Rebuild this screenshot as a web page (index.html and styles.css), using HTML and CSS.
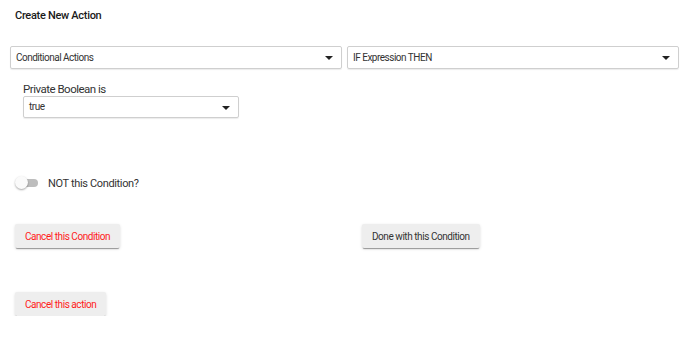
FILE: index.html
```html
<!DOCTYPE html>
<html lang="en">
<head>
  <meta charset="UTF-8">
  <title>Create New Action</title>
  <link rel="stylesheet" href="styles.css">
</head>
<body>

  <div class="title">Create New Action</div>

  <div class="select-row">
    <div class="dropdown">Conditional Actions<span class="caret"></span></div>
    <div class="dropdown">IF Expression THEN<span class="caret"></span></div>
  </div>

  <div class="field">
    <div class="field-label">Private Boolean is</div>
    <div class="dropdown small">true<span class="caret"></span></div>
  </div>

  <div class="toggle-row">
    <span class="switch"><span class="knob"></span></span>
    <span class="toggle-label">NOT this Condition?</span>
  </div>

  <div class="button-row">
    <div class="half"><button class="btn red">Cancel this Condition</button></div>
    <div class="half"><button class="btn">Done with this Condition</button></div>
  </div>

  <div class="button-row last">
    <div class="half"><button class="btn red">Cancel this action</button></div>
  </div>

</body>
</html>
```

FILE: styles.css
```css
body { margin: 0; font-family: Roboto, "Liberation Sans", sans-serif; color: #222; background: #fff; }
.title { padding: 8px 15px 0; font-size: 11px; letter-spacing: -0.3px; line-height: 16px; font-weight: 500; color: #1a1a1a; }
.select-row { display: flex; gap: 5px; padding: 0 11px 0 10px; margin-top: 22px; }
.dropdown { position: relative; flex: 1; height: 23px; box-sizing: border-box; border: 1px solid #cfcfcf; box-shadow: 0 1px 1px rgba(0,0,0,0.08); border-radius: 2px; padding: 0 5px; font-size: 10px; letter-spacing: -0.5px; line-height: 21px; color: #333; }
.caret { position: absolute; right: 8px; top: 9px; width: 0; height: 0; border-left: 4px solid transparent; border-right: 4px solid transparent; border-top: 4px solid #222; }
.field { margin: 13px 0 0 23px; }
.field-label { font-size: 11.5px; letter-spacing: -0.5px; line-height: 14px; color: #333; }
.dropdown.small { flex: none; width: 216px; height: 22px; line-height: 20px; }
.toggle-row { display: flex; align-items: center; gap: 10px; margin: 57px 0 0 15px; height: 16px; }
.switch { position: relative; width: 23px; height: 14px; }
.switch::before { content: ""; position: absolute; left: 4px; right: 0; top: 3px; height: 8px; border-radius: 4px; background: #bdbdbd; }
.knob { position: absolute; left: 0; top: 0; width: 13px; height: 13px; border-radius: 50%; background: #fafafa; box-shadow: 0 1px 2px rgba(0,0,0,0.35); }
.toggle-label { font-size: 11px; letter-spacing: -0.35px; color: #333; }
.button-row { display: flex; padding: 0 0 0 15px; margin-top: 33px; }
.button-row.last { margin-top: 44px; }
.half { flex: none; width: 347px; }
.btn { height: 24px; padding: 0 10px; border: none; border-radius: 2px; background: #eeeeee; box-shadow: 0 2px 1px -1px rgba(0,0,0,0.35), 0 1px 3px rgba(0,0,0,0.15); font-family: Roboto, "Liberation Sans", sans-serif; font-size: 10px; letter-spacing: -0.45px; color: #333; }
.btn.red { color: #ff1a1a; }
```
